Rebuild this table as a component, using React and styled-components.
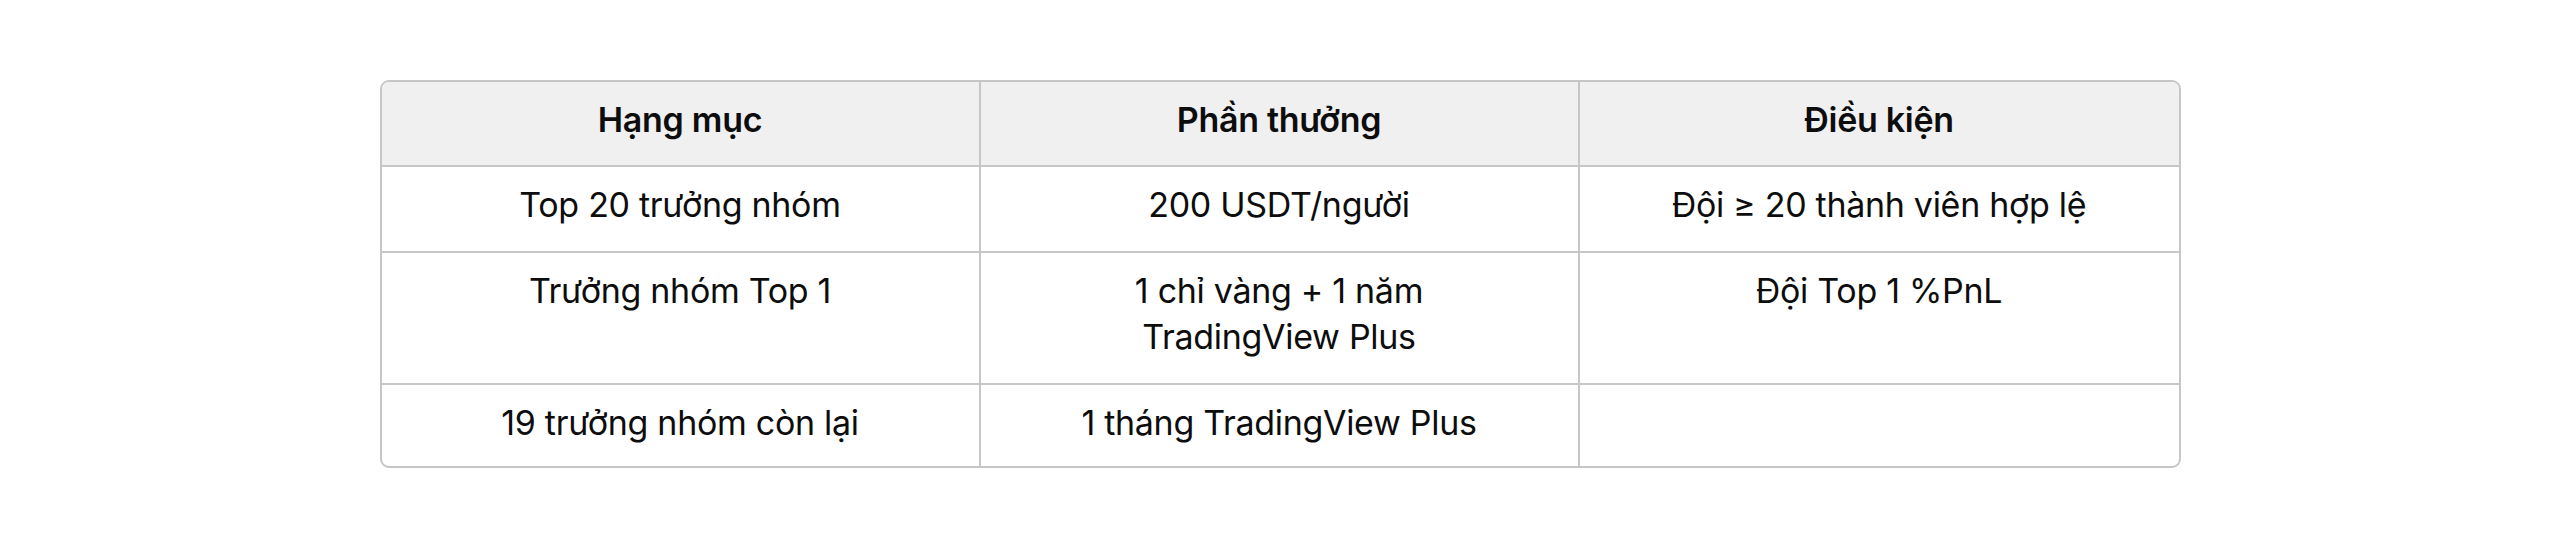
import React from 'react';
import styled, { createGlobalStyle } from 'styled-components';

const GlobalStyle = createGlobalStyle`
  html, body {
    margin: 0;
    padding: 0;
    background: #ffffff;
  }
  body {
    font-family: 'Inter', 'Liberation Sans', sans-serif;
    color: #0d0d0d;
  }
`;

const rows = [
  { category: 'Top 20 trưởng nhóm', reward: ['200 USDT/người'], condition: 'Đội ≥ 20 thành viên hợp lệ' },
  { category: 'Trưởng nhóm Top 1', reward: ['1 chỉ vàng + 1 năm', 'TradingView Plus'], condition: 'Đội Top 1 %PnL' },
  { category: '19 trưởng nhóm còn lại', reward: ['1 tháng TradingView Plus'], condition: '' },
];

const Page = styled.div`
  display: flex;
  justify-content: center;
  padding-top: 80px;
`;

const Table = styled.table`
  width: 1801px;
  table-layout: fixed;
  border-collapse: separate;
  border-spacing: 0;
  border: 2px solid #c6c6c6;
  border-radius: 9px;
  overflow: hidden;
`;

const HeadCell = styled.th`
  background: #f0f0f0;
  font-size: 34px;
  font-weight: 600;
  letter-spacing: -0.3px;
  line-height: 46px;
  padding: 15px 20px 22px;
  text-align: center;
  vertical-align: top;
  border-bottom: 2px solid #c6c6c6;
  border-right: ${(p) => (p.$last ? 'none' : '2px solid #c6c6c6')};
`;

const Cell = styled.td`
  font-size: 34px;
  font-weight: 400;
  letter-spacing: -0.3px;
  line-height: 46px;
  padding: 15px 20px ${(p) => (p.$lastRow ? '20px' : '23px')};
  text-align: center;
  vertical-align: top;
  border-bottom: ${(p) => (p.$lastRow ? 'none' : '2px solid #c6c6c6')};
  border-right: ${(p) => (p.$last ? 'none' : '2px solid #c6c6c6')};
`;

const Line = styled.div`
  white-space: nowrap;
`;

export default function App() {
  return (
    <>
      <GlobalStyle />
      <Page>
        <Table>
          <thead>
            <tr>
              <HeadCell>Hạng mục</HeadCell>
              <HeadCell>Phần thưởng</HeadCell>
              <HeadCell $last>Điều kiện</HeadCell>
            </tr>
          </thead>
          <tbody>
            {rows.map((row, i) => {
              const lastRow = i === rows.length - 1;
              return (
                <tr key={row.category}>
                  <Cell $lastRow={lastRow}>{row.category}</Cell>
                  <Cell $lastRow={lastRow}>
                    {row.reward.map((line) => (
                      <Line key={line}>{line}</Line>
                    ))}
                  </Cell>
                  <Cell $lastRow={lastRow} $last>
                    {row.condition}
                  </Cell>
                </tr>
              );
            })}
          </tbody>
        </Table>
      </Page>
    </>
  );
}
